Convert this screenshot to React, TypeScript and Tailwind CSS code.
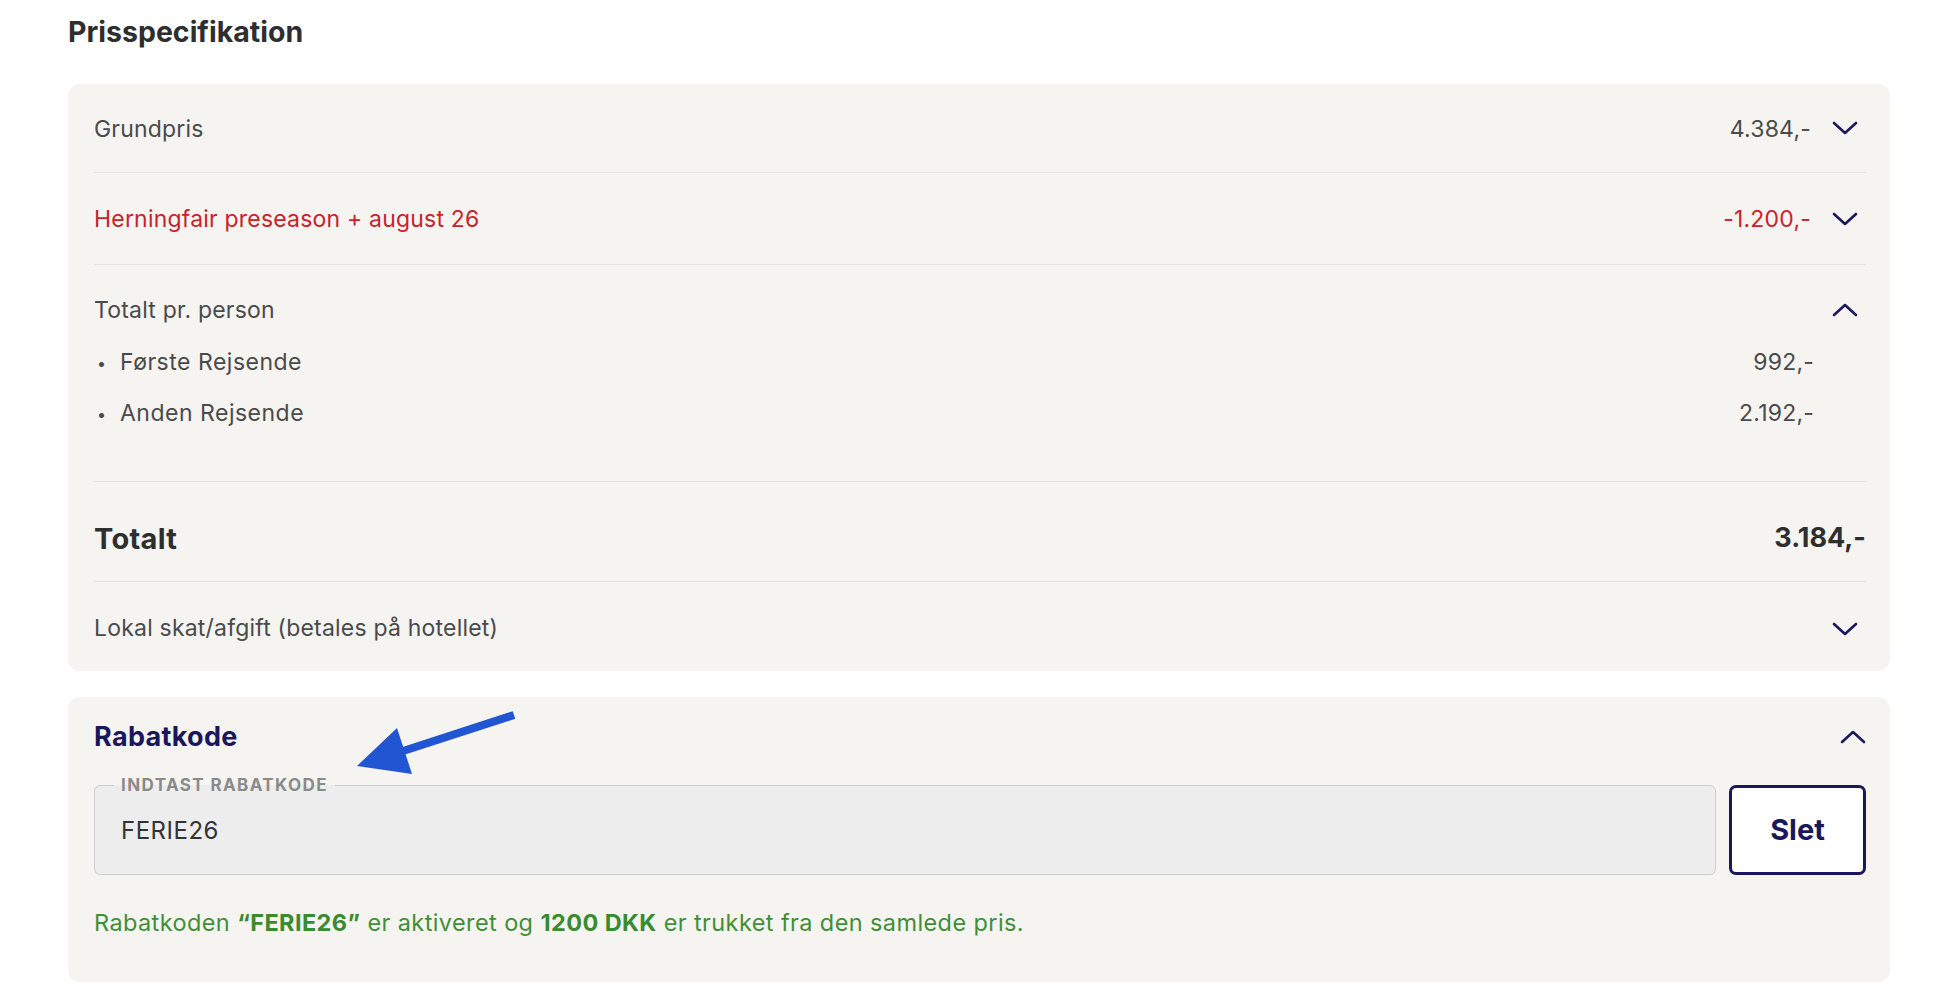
import React from 'react';

const Chevron = ({ up = false }: { up?: boolean }) => (
  <svg width="26" height="14" viewBox="0 0 26 14" fill="none" className={up ? 'rotate-180' : ''}>
    <polyline points="2,2 13,12 24,2" stroke="#1b175c" strokeWidth="2.6" strokeLinecap="round" strokeLinejoin="round" />
  </svg>
);

const font = { fontFamily: 'Inter, "Liberation Sans", sans-serif' };

export default function App() {
  const travellers = [
    { name: 'Første Rejsende', price: '992,-' },
    { name: 'Anden Rejsende', price: '2.192,-' },
  ];

  return (
    <div className="min-h-screen w-full bg-white pl-[68px] pr-[46px] text-[#4a4a4a]" style={font}>
      {/* Heading */}
      <h2 className="pt-[15px] text-[28.5px] font-bold leading-[34px] text-[#2e2e2e]">
        Prisspecifikation
      </h2>

      {/* Price card */}
      <div className="mt-[35px] rounded-[12px] bg-[#f5f4f1] pl-[26px] pr-[24px] text-[23px] tracking-[0.2px]">
        <div className="flex h-[89px] items-center justify-between border-b border-[#e2e1de]">
          <span className="pt-[2px]">Grundpris</span>
          <div className="flex items-center gap-[21px] pr-[8px]">
            <span className="pt-[2px]">4.384,-</span>
            <Chevron />
          </div>
        </div>

        <div className="flex h-[92px] items-center justify-between border-b border-[#e2e1de] text-[#c8232b]">
          <span className="pt-[2px]">Herningfair preseason + august 26</span>
          <div className="flex items-center gap-[21px] pr-[8px]">
            <span className="pt-[2px]">-1.200,-</span>
            <Chevron />
          </div>
        </div>

        {/* Per person */}
        <div className="border-b border-[#e2e1de] pt-[32px] pb-[42px]">
          <div className="flex h-[26px] items-center justify-between">
            <span>Totalt pr. person</span>
            <div className="pr-[8px]">
              <Chevron up />
            </div>
          </div>
          <div className="mt-[14px]">
            {travellers.map((t) => (
              <div key={t.name} className="flex h-[51px] items-center justify-between">
                <div className="flex items-center">
                  <span className="w-[26px] pl-[3px] text-[16px]">•</span>
                  <span className="tracking-[0.5px]">{t.name}</span>
                </div>
                <span className="pr-[52px]">{t.price}</span>
              </div>
            ))}
          </div>
        </div>

        <div className="flex h-[100px] items-center justify-between border-b border-[#e2e1de] pt-[14px] font-bold text-[#2e2e2e]">
          <span className="text-[29px] tracking-[0.3px]">Totalt</span>
          <span className="text-[27px] tracking-normal">3.184,-</span>
        </div>

        <div className="flex h-[89px] items-center justify-between pt-[4px]">
          <span>Lokal skat/afgift (betales på hotellet)</span>
          <div className="pr-[8px]">
            <Chevron />
          </div>
        </div>
      </div>

      {/* Discount code card */}
      <div className="relative mt-[26px] rounded-[12px] bg-[#f5f4f1] pl-[26px] pr-[24px] pt-[25px] pb-[45px]">
        <div className="flex h-[30px] items-center justify-between">
          <span className="text-[27px] font-bold tracking-[0.3px] text-[#1b175c]">Rabatkode</span>
          <Chevron up />
        </div>

        <div className="mt-[23px] flex gap-[13px]">
          <fieldset className="h-[100px] flex-1 rounded-[6px] border border-[#cfcfcf] bg-[#ededed] pl-[19px]">
            <legend className="px-[7px] text-[17px] font-bold uppercase leading-[20px] tracking-[1.4px] text-[#8a8a8a]">
              Indtast rabatkode
            </legend>
            <div className="mt-[22px] pl-[7px] text-[24px] leading-[28px] tracking-[0.5px] text-[#333]">FERIE26</div>
          </fieldset>
          <button className="mt-[10px] h-[90px] w-[137px] rounded-[7px] border-[3px] border-[#1b175c] bg-white text-[29px] font-bold text-[#1b175c]">
            Slet
          </button>
        </div>

        <p className="mt-[34px] text-[23.5px] leading-[28px] tracking-[0.4px] text-[#3f8f36]">
          Rabatkoden <b className="font-bold text-[#3a8a30]">“FERIE26”</b> er aktiveret og{' '}
          <b className="font-bold text-[#3a8a30]">1200 DKK</b> er trukket fra den samlede pris.
        </p>

        {/* Annotation arrow */}
        <svg className="absolute left-[280px] top-[10px]" width="180" height="80" viewBox="0 0 180 80">
          <line x1="166" y1="8" x2="52" y2="45" stroke="#2255d1" strokeWidth="8" />
          <polygon points="9,59 49,21 64,67" fill="#2255d1" />
        </svg>
      </div>
    </div>
  );
}
